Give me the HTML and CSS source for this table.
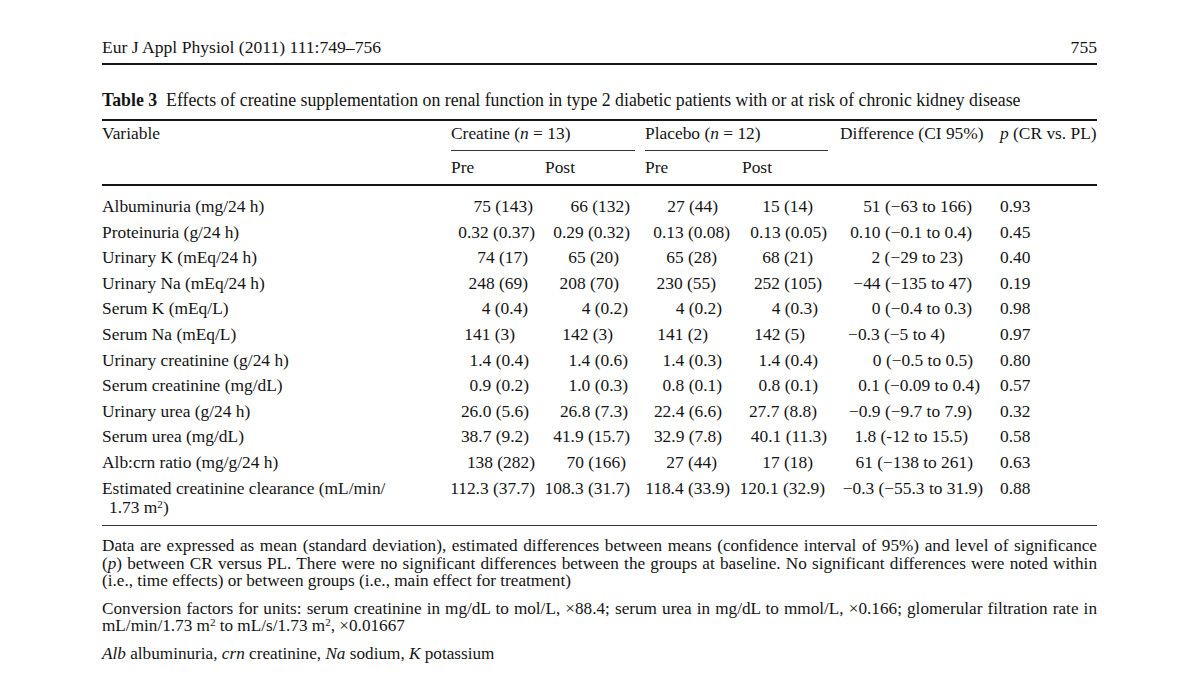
FILE: index.html
```html
<!DOCTYPE html>
<html lang="en">
<head>
<meta charset="utf-8">
<title>Eur J Appl Physiol (2011) 111:749–756 — Table 3</title>
<link rel="stylesheet" href="styles.css">
</head>
<body>
<div class="page">
  <header class="running-head">
    <span>Eur J Appl Physiol (2011) 111:749–756</span>
    <span>755</span>
  </header>

  <p class="caption"><b>Table 3</b>&nbsp; Effects of creatine supplementation on renal function in type 2 diabetic patients with or at risk of chronic kidney disease</p>

  <table class="data">
    <colgroup>
      <col class="w-var"><col class="w-cpre"><col class="w-cpost"><col class="w-ppre"><col class="w-ppost"><col class="w-diff"><col class="w-p">
    </colgroup>
    <thead>
      <tr class="h1">
        <th class="hv">Variable</th>
        <th colspan="2" class="hg"><div class="group cr">Creatine (<i>n</i> = 13)</div></th>
        <th colspan="2" class="hg"><div class="group pl">Placebo (<i>n</i> = 12)</div></th>
        <th class="hd">Difference (CI 95%)</th>
        <th class="hp"><i>p</i> (CR vs. PL)</th>
      </tr>
      <tr class="h2">
        <th></th>
        <th class="s2">Pre</th>
        <th class="s3">Post</th>
        <th class="s4">Pre</th>
        <th class="s5">Post</th>
        <th></th>
        <th></th>
      </tr>
    </thead>
    <tbody>
      <tr><td class="v">Albuminuria (mg/24 h)</td><td class="n p6">75 (143)</td><td class="n p10">66 (132)</td><td class="n p19">27 (44)</td><td class="n p21">15 (14)</td><td class="n p22">51 (−63 to 166)</td><td class="pv">0.93</td></tr>
      <tr><td class="v">Proteinuria (g/24 h)</td><td class="n p4">0.32 (0.37)</td><td class="n p10">0.29 (0.32)</td><td class="n p7">0.13 (0.08)</td><td class="n p7">0.13 (0.05)</td><td class="n p22">0.10 (−0.1 to 0.4)</td><td class="pv">0.45</td></tr>
      <tr><td class="v">Urinary K (mEq/24 h)</td><td class="n p11">74 (17)</td><td class="n p21">65 (20)</td><td class="n p20">65 (28)</td><td class="n p21">68 (21)</td><td class="n p31">2 (−29 to 23)</td><td class="pv">0.40</td></tr>
      <tr><td class="v">Urinary Na (mEq/24 h)</td><td class="n p11">248 (69)</td><td class="n p21">208 (70)</td><td class="n p21">230 (55)</td><td class="n p12">252 (105)</td><td class="n p22">−44 (−135 to 47)</td><td class="pv">0.19</td></tr>
      <tr><td class="v">Serum K (mEq/L)</td><td class="n p11">4 (0.4)</td><td class="n p12">4 (0.2)</td><td class="n p15">4 (0.2)</td><td class="n p16">4 (0.3)</td><td class="n p22">0 (−0.4 to 0.3)</td><td class="pv">0.98</td></tr>
      <tr><td class="v">Serum Na (mEq/L)</td><td class="n p24">141 (3)</td><td class="n p27">142 (3)</td><td class="n p29">141 (2)</td><td class="n p29">142 (5)</td><td class="n p49">−0.3 (−5 to 4)</td><td class="pv">0.97</td></tr>
      <tr><td class="v">Urinary creatinine (g/24 h)</td><td class="n p10">1.4 (0.4)</td><td class="n p12">1.4 (0.6)</td><td class="n p15">1.4 (0.3)</td><td class="n p16">1.4 (0.4)</td><td class="n p21">0 (−0.5 to 0.5)</td><td class="pv">0.80</td></tr>
      <tr><td class="v">Serum creatinine (mg/dL)</td><td class="n p10">0.9 (0.2)</td><td class="n p12">1.0 (0.3)</td><td class="n p15">0.8 (0.1)</td><td class="n p16">0.8 (0.1)</td><td class="n p14">0.1 (−0.09 to 0.4)</td><td class="pv">0.57</td></tr>
      <tr><td class="v">Urinary urea (g/24 h)</td><td class="n p10">26.0 (5.6)</td><td class="n p12">26.8 (7.3)</td><td class="n p15">22.4 (6.6)</td><td class="n p17">27.7 (8.8)</td><td class="n p22">−0.9 (−9.7 to 7.9)</td><td class="pv">0.32</td></tr>
      <tr><td class="v">Serum urea (mg/dL)</td><td class="n p10">38.7 (9.2)</td><td class="n p10">41.9 (15.7)</td><td class="n p15">32.9 (7.8)</td><td class="n p7">40.1 (11.3)</td><td class="n p26">1.8 (-12 to 15.5)</td><td class="pv">0.58</td></tr>
      <tr><td class="v">Alb:crn ratio (mg/g/24 h)</td><td class="n p4">138 (282)</td><td class="n p14">70 (166)</td><td class="n p20">27 (44)</td><td class="n p21">17 (18)</td><td class="n p21">61 (−138 to 261)</td><td class="pv">0.63</td></tr>
      <tr class="last"><td class="v hang">Estimated creatinine clearance (mL/min/<br>1.73 m<sup>2</sup>)</td><td class="n p4">112.3 (37.7)</td><td class="n p10">108.3 (31.7)</td><td class="n p7">118.4 (33.9)</td><td class="n p9">120.1 (32.9)</td><td class="n p11">−0.3 (−55.3 to 31.9)</td><td class="pv">0.88</td></tr>
    </tbody>
  </table>

  <div class="notes">
    <p class="note">
      <span class="jl">Data are expressed as mean (standard deviation), estimated differences between means (confidence interval of 95%) and level of significance</span>
      <span class="jl">(<i>p</i>) between CR versus PL. There were no significant differences between the groups at baseline. No significant differences were noted within</span>
      <span class="ll">(i.e., time effects) or between groups (i.e., main effect for treatment)</span>
    </p>
    <p class="note">
      <span class="jl">Conversion factors for units: serum creatinine in mg/dL to mol/L, ×88.4; serum urea in mg/dL to mmol/L, ×0.166; glomerular filtration rate in</span>
      <span class="ll">mL/min/1.73 m<sup>2</sup> to mL/s/1.73 m<sup>2</sup>, ×0.01667</span>
    </p>
    <p class="note"><span class="ll"><i>Alb</i> albuminuria, <i>crn</i> creatinine, <i>Na</i> sodium, <i>K</i> potassium</span></p>
  </div>
</div>
</body>
</html>
```

FILE: styles.css
```css
html, body {
  margin: 0;
  padding: 0;
  background: #ffffff;
}

body {
  color: #141414;
  font-family: "Liberation Serif", "Times New Roman", serif;
  font-size: 17.4px;
}

.page {
  width: 995px;
  margin-left: 102px;
  padding-top: 37px;
}

.running-head {
  display: flex;
  justify-content: space-between;
  line-height: 20px;
  font-size: 17.6px;
  padding-bottom: 6px;
  border-bottom: 2px solid #141414;
}

.caption {
  margin: 25px 0 0 0;
  line-height: 20px;
  font-size: 17.8px;
  white-space: nowrap;
}

.caption b {
  font-weight: bold;
}

/* ---------- table ---------- */
.data {
  margin-top: 9px;
  width: 995px;
  table-layout: fixed;
  border-collapse: separate;
  border-spacing: 0;
  line-height: 19px;
}

.w-var { width: 343px; }
.w-cpre { width: 94px; }
.w-cpost { width: 101px; }
.w-ppre { width: 97px; }
.w-ppost { width: 97px; }
.w-diff { width: 160px; }
.w-p { width: 103px; }

.data th {
  font-weight: normal;
  text-align: left;
  vertical-align: top;
  padding: 0;
  white-space: nowrap;
}

.h1 th {
  border-top: 2px solid #141414;
  padding-top: 3px;
}

.group {
  padding-bottom: 7px;
  border-bottom: 1.5px solid #333;
}

.group.cr { margin: 0 5px 0 6px; }
.group.pl { margin: 0 6px 0 5px; }

.h1 .hd { padding-left: 6px; }
.h1 .hp { padding-left: 6px; }

.h2 th {
  padding-top: 6.5px;
  padding-bottom: 7.5px;
  border-bottom: 2px solid #141414;
}

.h2 .s2 { padding-left: 6px; }
.h2 .s3 { padding-left: 6px; }
.h2 .s4 { padding-left: 5px; }
.h2 .s5 { padding-left: 5px; }

.data td {
  padding-top: 3.3px;
  padding-bottom: 3.3px;
  white-space: nowrap;
  vertical-align: top;
}

.data tbody tr:first-child td {
  padding-top: 11px;
}

.data tr.last td {
  padding-bottom: 8.5px;
  border-bottom: 1.5px solid #333;
}

.v {
  text-align: left;
  padding-left: 0;
}

.hang {
  padding-left: 7px;
  text-indent: -7px;
}

.n { text-align: right; }
.pv { text-align: left; padding-left: 6px; }

/* right offsets of the typeset numbers */
.p4 { padding-right: 4px; }
.p6 { padding-right: 6px; }
.p7 { padding-right: 7px; }
.p9 { padding-right: 9px; }
.p10 { padding-right: 10px; }
.p11 { padding-right: 11px; }
.p12 { padding-right: 12px; }
.p14 { padding-right: 14px; }
.p15 { padding-right: 15px; }
.p16 { padding-right: 16px; }
.p17 { padding-right: 17px; }
.p19 { padding-right: 19px; }
.p20 { padding-right: 20px; }
.p21 { padding-right: 21px; }
.p22 { padding-right: 22px; }
.p24 { padding-right: 24px; }
.p26 { padding-right: 26px; }
.p27 { padding-right: 27px; }
.p29 { padding-right: 29px; }
.p31 { padding-right: 31px; }
.p49 { padding-right: 49px; }

sup {
  font-size: 0.64em;
  line-height: 0;
  vertical-align: 0.42em;
}

/* ---------- notes ---------- */
.notes {
  margin-top: 11px;
}

.note {
  margin: 0 0 10px 0;
  line-height: 17.6px;
  font-size: 17.2px;
}

.jl {
  display: block;
  text-align: justify;
  text-align-last: justify;
  white-space: nowrap;
}

.ll {
  display: block;
  text-align: left;
  white-space: nowrap;
}
```
